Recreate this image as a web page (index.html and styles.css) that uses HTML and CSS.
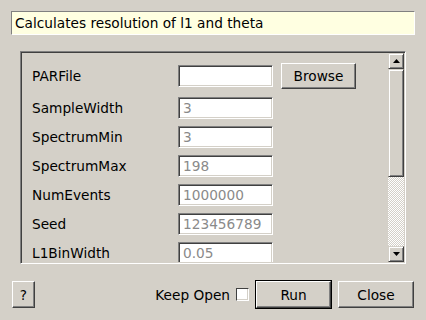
FILE: index.html
```html
<!DOCTYPE html>
<html>
<head>
<meta charset="utf-8">
<link rel="stylesheet" href="styles.css">
</head>
<body>
<div class="dialog">
  <div class="desc">Calculates resolution of l1 and theta</div>
  <div class="frame">
    <div class="viewport">
      <div class="form">
        <div class="row first">
          <span class="label">PARFile</span>
          <span class="field"></span>
          <span class="btn browse">Browse</span>
        </div>
        <div class="row"><span class="label">SampleWidth</span><span class="field">3</span></div>
        <div class="row"><span class="label">SpectrumMin</span><span class="field">3</span></div>
        <div class="row"><span class="label">SpectrumMax</span><span class="field">198</span></div>
        <div class="row"><span class="label">NumEvents</span><span class="field">1000000</span></div>
        <div class="row"><span class="label">Seed</span><span class="field">123456789</span></div>
        <div class="row"><span class="label">L1BinWidth</span><span class="field">0.05</span></div>
      </div>
    </div>
    <div class="vscroll">
      <div class="sb-btn">
        <svg width="7" height="4" viewBox="0 0 7 4"><polygon points="3.5,0 7,4 0,4" fill="#000"/></svg>
      </div>
      <div class="sb-thumb"></div>
      <div class="sb-track"></div>
      <div class="sb-btn">
        <svg width="7" height="4" viewBox="0 0 7 4"><polygon points="0,0 7,0 3.5,4" fill="#000"/></svg>
      </div>
    </div>
  </div>
  <div class="footer">
    <span class="btn help">?</span>
    <span class="spacer"></span>
    <span class="keep">Keep Open</span>
    <span class="check"></span>
    <span class="btn run">Run</span>
    <span class="btn close">Close</span>
  </div>
</div>
</body>
</html>
```

FILE: styles.css
```css
html, body {
  margin: 0;
  padding: 0;
  background: #d4d0c8;
}
body {
  width: 426px;
  height: 320px;
  overflow: hidden;
  font-family: "DejaVu Sans", sans-serif;
  font-size: 13.7px;
  color: #000;
}
.dialog {
  padding-top: 11px;
}
.desc {
  margin: 0 11px;
  height: 24px;
  box-sizing: border-box;
  background: #ffffe1;
  border: 1px solid;
  border-color: #808080 #fff #fff #808080;
  padding-left: 3px;
  line-height: 22px;
  white-space: nowrap;
}
.frame {
  margin: 16px 20px 0;
  height: 213px;
  box-sizing: border-box;
  border: 1px solid;
  border-color: #808080 #fff #fff #808080;
  box-shadow: inset 1px 1px 0 #404040;
  padding: 1px;
  display: flex;
}
.viewport {
  flex: 1;
  overflow: hidden;
}
.form {
  padding: 10px 0 0 10px;
}
.row {
  display: flex;
  align-items: center;
  height: 22px;
  margin-bottom: 7px;
}
.row.first {
  height: 26px;
  margin-bottom: 8px;
}
.label {
  width: 146px;
  white-space: nowrap;
}
.field {
  width: 95px;
  height: 22px;
  box-sizing: border-box;
  background: #fff;
  border: 1px solid;
  border-color: #808080 #fff #fff #808080;
  box-shadow: inset 1px 1px 0 #404040, inset -1px -1px 0 #d4d0c8;
  padding-left: 4px;
  line-height: 20px;
  color: #8a8a8a;
}
.btn {
  display: inline-flex;
  align-items: center;
  justify-content: center;
  box-sizing: border-box;
  background: #d4d0c8;
  border: 1px solid;
  border-color: #fff #404040 #404040 #fff;
  box-shadow: inset -1px -1px 0 #808080;
  height: 27px;
  color: #000;
}
.browse {
  width: 75px;
  height: 26px;
  margin-left: 8px;
}
.vscroll {
  width: 16px;
  display: flex;
  flex-direction: column;
}
.sb-btn {
  height: 16px;
  box-sizing: border-box;
  background: #d4d0c8;
  border: 1px solid;
  border-color: #d4d0c8 #404040 #404040 #d4d0c8;
  box-shadow: inset 1px 1px 0 #fff, inset -1px -1px 0 #808080;
  display: flex;
  align-items: center;
  justify-content: center;
}
.sb-btn svg {
  display: block;
}
.sb-thumb {
  height: 108px;
  box-sizing: border-box;
  background: #d4d0c8;
  border: 1px solid;
  border-color: #d4d0c8 #404040 #404040 #d4d0c8;
  box-shadow: inset 1px 1px 0 #fff, inset -1px -1px 0 #808080;
}
.sb-track {
  flex: 1;
  background: repeating-conic-gradient(#fff 0 25%, #d4d0c8 0 50%) 0 0 / 2px 2px;
}
.footer {
  display: flex;
  align-items: center;
  height: 29px;
  margin-top: 16px;
  padding: 0 12px;
}
.help {
  width: 23px;
}
.spacer {
  flex: 1;
}
.keep {
  white-space: nowrap;
}
.check {
  width: 13px;
  height: 13px;
  box-sizing: border-box;
  background: #fff;
  border: 1px solid;
  border-color: #404040 #fff #fff #404040;
  box-shadow: inset -1px -1px 0 #d4d0c8;
  margin-left: 6px;
}
.run {
  width: 75px;
  outline: 1px solid #000;
  margin-left: 7px;
}
.close {
  width: 76px;
  margin-left: 7px;
}
```
